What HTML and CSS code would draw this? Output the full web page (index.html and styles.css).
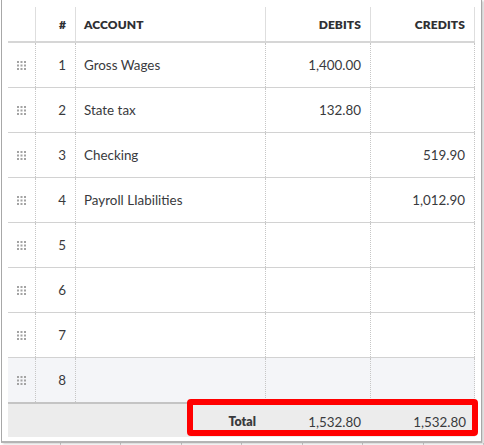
FILE: index.html
```html
<!DOCTYPE html>
<html>
<head>
<meta charset="utf-8">
<link rel="stylesheet" href="styles.css">
</head>
<body>
<div class="frame">
  <div class="table">
    <div class="row head">
      <div class="cell c1"></div>
      <div class="cell c2 num">#</div>
      <div class="cell c3">ACCOUNT</div>
      <div class="cell c4 num">DEBITS</div>
      <div class="cell c5 num">CREDITS</div>
    </div>
    <div class="row body">
      <div class="cell c1"><svg class="grip" width="9" height="9" viewBox="0 0 9 9"><g fill="#a3a3a3"><rect x="0" y="0" width="2" height="2"/><rect x="3.5" y="0" width="2" height="2"/><rect x="7" y="0" width="2" height="2"/><rect x="0" y="3.5" width="2" height="2"/><rect x="3.5" y="3.5" width="2" height="2"/><rect x="7" y="3.5" width="2" height="2"/><rect x="0" y="7" width="2" height="2"/><rect x="3.5" y="7" width="2" height="2"/><rect x="7" y="7" width="2" height="2"/></g></svg></div>
      <div class="cell c2 num">1</div>
      <div class="cell c3">Gross Wages</div>
      <div class="cell c4 num">1,400.00</div>
      <div class="cell c5 num"></div>
    </div>
    <div class="row body">
      <div class="cell c1"><svg class="grip" width="9" height="9" viewBox="0 0 9 9"><g fill="#a3a3a3"><rect x="0" y="0" width="2" height="2"/><rect x="3.5" y="0" width="2" height="2"/><rect x="7" y="0" width="2" height="2"/><rect x="0" y="3.5" width="2" height="2"/><rect x="3.5" y="3.5" width="2" height="2"/><rect x="7" y="3.5" width="2" height="2"/><rect x="0" y="7" width="2" height="2"/><rect x="3.5" y="7" width="2" height="2"/><rect x="7" y="7" width="2" height="2"/></g></svg></div>
      <div class="cell c2 num">2</div>
      <div class="cell c3">State tax</div>
      <div class="cell c4 num">132.80</div>
      <div class="cell c5 num"></div>
    </div>
    <div class="row body">
      <div class="cell c1"><svg class="grip" width="9" height="9" viewBox="0 0 9 9"><g fill="#a3a3a3"><rect x="0" y="0" width="2" height="2"/><rect x="3.5" y="0" width="2" height="2"/><rect x="7" y="0" width="2" height="2"/><rect x="0" y="3.5" width="2" height="2"/><rect x="3.5" y="3.5" width="2" height="2"/><rect x="7" y="3.5" width="2" height="2"/><rect x="0" y="7" width="2" height="2"/><rect x="3.5" y="7" width="2" height="2"/><rect x="7" y="7" width="2" height="2"/></g></svg></div>
      <div class="cell c2 num">3</div>
      <div class="cell c3">Checking</div>
      <div class="cell c4 num"></div>
      <div class="cell c5 num">519.90</div>
    </div>
    <div class="row body">
      <div class="cell c1"><svg class="grip" width="9" height="9" viewBox="0 0 9 9"><g fill="#a3a3a3"><rect x="0" y="0" width="2" height="2"/><rect x="3.5" y="0" width="2" height="2"/><rect x="7" y="0" width="2" height="2"/><rect x="0" y="3.5" width="2" height="2"/><rect x="3.5" y="3.5" width="2" height="2"/><rect x="7" y="3.5" width="2" height="2"/><rect x="0" y="7" width="2" height="2"/><rect x="3.5" y="7" width="2" height="2"/><rect x="7" y="7" width="2" height="2"/></g></svg></div>
      <div class="cell c2 num">4</div>
      <div class="cell c3">Payroll LIabilities</div>
      <div class="cell c4 num"></div>
      <div class="cell c5 num">1,012.90</div>
    </div>
    <div class="row body">
      <div class="cell c1"><svg class="grip" width="9" height="9" viewBox="0 0 9 9"><g fill="#a3a3a3"><rect x="0" y="0" width="2" height="2"/><rect x="3.5" y="0" width="2" height="2"/><rect x="7" y="0" width="2" height="2"/><rect x="0" y="3.5" width="2" height="2"/><rect x="3.5" y="3.5" width="2" height="2"/><rect x="7" y="3.5" width="2" height="2"/><rect x="0" y="7" width="2" height="2"/><rect x="3.5" y="7" width="2" height="2"/><rect x="7" y="7" width="2" height="2"/></g></svg></div>
      <div class="cell c2 num">5</div>
      <div class="cell c3"></div>
      <div class="cell c4 num"></div>
      <div class="cell c5 num"></div>
    </div>
    <div class="row body">
      <div class="cell c1"><svg class="grip" width="9" height="9" viewBox="0 0 9 9"><g fill="#a3a3a3"><rect x="0" y="0" width="2" height="2"/><rect x="3.5" y="0" width="2" height="2"/><rect x="7" y="0" width="2" height="2"/><rect x="0" y="3.5" width="2" height="2"/><rect x="3.5" y="3.5" width="2" height="2"/><rect x="7" y="3.5" width="2" height="2"/><rect x="0" y="7" width="2" height="2"/><rect x="3.5" y="7" width="2" height="2"/><rect x="7" y="7" width="2" height="2"/></g></svg></div>
      <div class="cell c2 num">6</div>
      <div class="cell c3"></div>
      <div class="cell c4 num"></div>
      <div class="cell c5 num"></div>
    </div>
    <div class="row body">
      <div class="cell c1"><svg class="grip" width="9" height="9" viewBox="0 0 9 9"><g fill="#a3a3a3"><rect x="0" y="0" width="2" height="2"/><rect x="3.5" y="0" width="2" height="2"/><rect x="7" y="0" width="2" height="2"/><rect x="0" y="3.5" width="2" height="2"/><rect x="3.5" y="3.5" width="2" height="2"/><rect x="7" y="3.5" width="2" height="2"/><rect x="0" y="7" width="2" height="2"/><rect x="3.5" y="7" width="2" height="2"/><rect x="7" y="7" width="2" height="2"/></g></svg></div>
      <div class="cell c2 num">7</div>
      <div class="cell c3"></div>
      <div class="cell c4 num"></div>
      <div class="cell c5 num"></div>
    </div>
    <div class="row body last">
      <div class="cell c1"><svg class="grip" width="9" height="9" viewBox="0 0 9 9"><g fill="#a3a3a3"><rect x="0" y="0" width="2" height="2"/><rect x="3.5" y="0" width="2" height="2"/><rect x="7" y="0" width="2" height="2"/><rect x="0" y="3.5" width="2" height="2"/><rect x="3.5" y="3.5" width="2" height="2"/><rect x="7" y="3.5" width="2" height="2"/><rect x="0" y="7" width="2" height="2"/><rect x="3.5" y="7" width="2" height="2"/><rect x="7" y="7" width="2" height="2"/></g></svg></div>
      <div class="cell c2 num">8</div>
      <div class="cell c3"></div>
      <div class="cell c4 num"></div>
      <div class="cell c5 num"></div>
    </div>
    <div class="row total">
      <div class="cell c1"></div>
      <div class="cell c2"></div>
      <div class="cell c3 num label">Total</div>
      <div class="cell c4 num">1,532.80</div>
      <div class="cell c5 num">1,532.80</div>
    </div>
  </div>
  <div class="highlight"></div>
</div>
<div class="ticks">
  <span></span><span></span><span></span><span></span><span></span><span></span><span></span><span></span>
</div>
</body>
</html>
```

FILE: styles.css
```css
html, body {
  margin: 0;
  padding: 0;
  background: #ffffff;
}

body {
  font-family: Lato, "Open Sans", Arial, sans-serif;
  color: #393a3d;
  width: 484px;
  height: 445px;
  overflow: hidden;
}

.frame {
  position: relative;
  box-sizing: border-box;
  margin-left: 1px;
  width: 481px;
  height: 443px;
  padding-left: 6px;
  border-left: 1px solid #a8a8a8;
  border-right: 1px solid #a8a8a8;
  border-bottom: 2px solid #b4b4b4;
  box-shadow: 2px 1px 2px rgba(0, 0, 0, 0.18);
}

.table {
  width: 467px;
}

.row {
  display: grid;
  grid-template-columns: 27px 40px 190px 105px 105px;
}

.cell {
  box-sizing: border-box;
  display: flex;
  align-items: center;
  padding: 0 8px;
  white-space: nowrap;
}

.num {
  justify-content: flex-end;
  padding-right: 9px;
}

.c1 {
  justify-content: center;
  padding: 0;
}

/* header */
.head {
  padding-top: 7px;
  border-bottom: 2px solid #d6d6d6;
}

.head .cell {
  height: 34px;
  font-size: 12px;
  font-weight: 800;
  color: #2f3033;
  letter-spacing: 0.1px;
}

.head .c2,
.head .c3,
.head .c4,
.head .c5 {
  border-left: 1px solid #dedede;
}

.head .c5 {
  border-right: 1px solid #dedede;
}

/* body rows */
.body {
  border-bottom: 1px solid #d2d2d2;
}

.body .cell {
  height: 44px;
  font-size: 13.4px;
}

.body .c2,
.body .c3,
.body .c4,
.body .c5 {
  border-left: 1px dotted #c6c6c6;
}

.body .c5 {
  border-right: 1px dotted #c6c6c6;
}

.body.last {
  background: #f4f5f8;
  border-bottom: none;
}

.grip {
  display: block;
}

/* total */
.total {
  background: #ececec;
  border-top: 2px solid #c4c4c4;
}

.total .cell {
  height: 33px;
  font-size: 13.4px;
  padding-top: 2px;
}

.total .label {
  font-size: 12.4px;
  font-weight: 800;
  color: #393a3d;
}

.highlight {
  position: absolute;
  left: 185px;
  top: 399px;
  width: 291px;
  height: 37px;
  box-sizing: border-box;
  border: 6px solid #ff0000;
  border-radius: 4px;
}

.ticks {
  display: flex;
  height: 2px;
}

.ticks span {
  width: 63px;
  height: 2px;
  border-right: 1px solid #cfcfcf;
}
```
